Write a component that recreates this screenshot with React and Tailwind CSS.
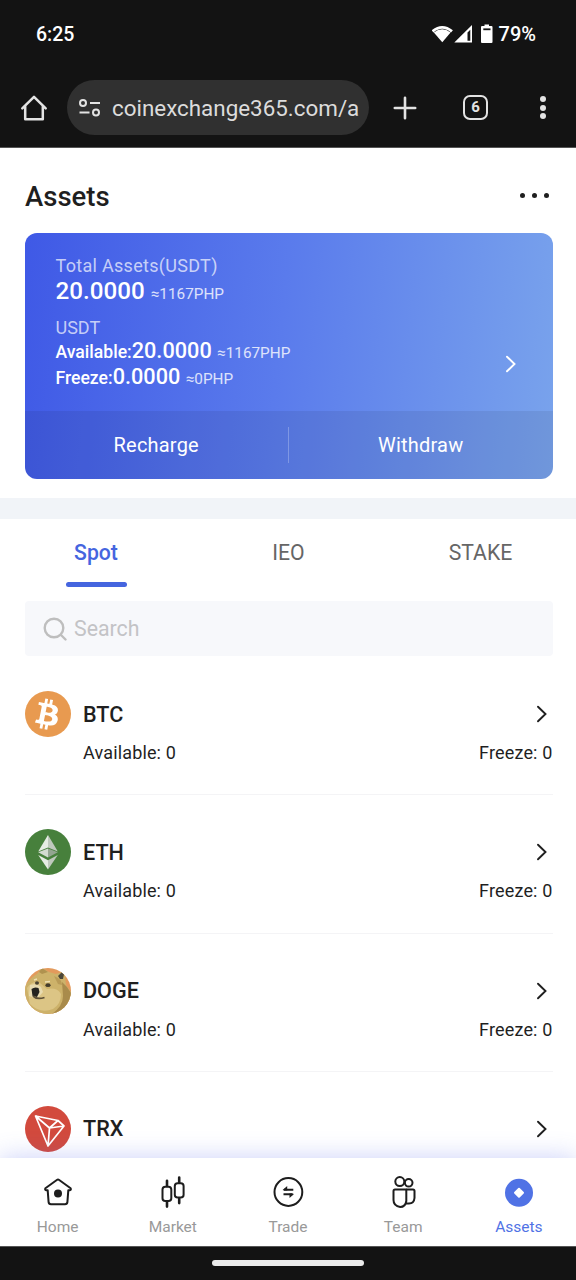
import { FaBitcoin } from "react-icons/fa";

const coins = [
  { name: "BTC", Icon: BtcIcon, available: 0, freeze: 0 },
  { name: "ETH", Icon: EthIcon, available: 0, freeze: 0 },
  { name: "DOGE", Icon: DogeIcon, available: 0, freeze: 0 },
  { name: "TRX", Icon: TrxIcon },
];

const tabs = ["Spot", "IEO", "STAKE"];

const navItems = [
  { label: "Home", Icon: HomeIcon },
  { label: "Market", Icon: MarketIcon },
  { label: "Trade", Icon: TradeIcon },
  { label: "Team", Icon: TeamIcon },
  { label: "Assets", Icon: AssetsIcon, active: true },
];

function BtcIcon() {
  return (
    <span className="flex size-[46px] items-center justify-center overflow-hidden rounded-full bg-white">
      <FaBitcoin className="size-[51px] shrink-0 -rotate-3 text-[#e89a50]" />
    </span>
  );
}

function EthIcon() {
  return (
    <svg viewBox="0 0 46 46" className="size-[46px]">
      <circle cx="23" cy="23" r="23" fill="#47803c" />
      <path d="M23 6 13.2 22.5 23 18.5Z" fill="#e6ece4" />
      <path d="M23 6 32.8 22.5 23 18.5Z" fill="#bfc9bd" />
      <path d="M23 19.5 13.2 23.3 23 28.5Z" fill="#d3dbd1" />
      <path d="M23 19.5 32.8 23.3 23 28.5Z" fill="#93a591" />
      <path d="M13.2 26 23 31.2V40.5Z" fill="#e6ece4" />
      <path d="M32.8 26 23 31.2V40.5Z" fill="#bfc9bd" />
    </svg>
  );
}

function DogeIcon() {
  return (
    <svg viewBox="0 0 46 46" className="size-[46px]">
      <defs>
        <clipPath id="doge">
          <circle cx="23" cy="23" r="23" />
        </clipPath>
      </defs>
      <g clipPath="url(#doge)">
        <rect width="46" height="46" fill="#e39a5c" />
        <path d="M0 46V18Q5 10 12 6L17 0 24 4 31 6 37 4 40 8 41 17 46 24V46Z" fill="#cdb26a" />
        <path d="M14 4 17 0 23 4 17 6Z" fill="#b0924f" />
        <path d="M37 14Q43 19 46 25V40L36 46H27Q38 38 38 28Z" fill="#a98b4b" />
        <path d="M29 8Q37 11 37 17L33 16Z" fill="#b99b57" />
        <path d="M33 8 37 4 39 6 38 11 35 11Z" fill="#4b4638" />
        <path d="M2 20Q7 12 15 15L22 21Q32 19 36 26 36 36 28 41 15 46 5 36Z" fill="#dcc585" />
        <path d="M5 17Q12 15 16 19L18 24 12 31 4 28Z" fill="#e8dbb0" />
        <path d="M6.5 21Q9.5 18.5 13.5 20L14.5 24 12 29 7.5 28Z" fill="#24231f" />
        <path d="M8 28Q12 32 19.5 29.5" stroke="#5d5036" strokeWidth="1.8" fill="none" />
        <ellipse cx="12" cy="15" rx="2" ry="1.7" fill="#4b4433" />
        <ellipse cx="23" cy="17.2" rx="2.6" ry="1.9" fill="#443c2c" />
        <path d="M9 12 12 11M20 14 25 13.5" stroke="#eee0b3" strokeWidth="1.4" />
      </g>
    </svg>
  );
}

function TrxIcon() {
  return (
    <svg viewBox="0 0 46 46" className="size-[46px]" fill="none">
      <circle cx="23" cy="23" r="23" fill="#d24a3d" />
      <path
        d="M10.5 10 33 14.5 39 20 23 40ZM10.5 10 24.5 22 23 40M24.5 22 33 14.5M24.5 22 39 20"
        stroke="white"
        strokeWidth="1.7"
        strokeLinejoin="round"
      />
    </svg>
  );
}

function HomeIcon() {
  return (
    <svg viewBox="0 0 32 32" className="size-8" fill="none" stroke="#1d1d1d" strokeWidth="2" strokeLinejoin="round">
      <path d="M14.8 4Q16 3.2 17.2 4L28.6 12.2Q29.4 14 27.8 14.3H26.3L25.4 26.2Q25.2 28.2 23 28.2H9Q6.8 28.2 6.6 26.2L5.7 14.3H4.2Q2.6 14 3.4 12.2Z" />
      <circle cx="16" cy="17.5" r="4" fill="#1d1d1d" stroke="none" />
    </svg>
  );
}

function MarketIcon() {
  return (
    <svg viewBox="0 0 32 32" className="size-8" fill="none" stroke="#1d1d1d" strokeWidth="2" strokeLinecap="round">
      <rect x="5.5" y="10.8" width="8.8" height="14.3" rx="2.8" />
      <rect x="17.8" y="7.3" width="8.8" height="14.3" rx="2.8" />
      <path strokeWidth="2.6" d="M10 4.8v5M10 26.3v4.3M22.2 1.6v5M22.2 22.8v4.3" />
    </svg>
  );
}

function TradeIcon() {
  return (
    <svg viewBox="0 0 32 32" className="size-8" fill="none" stroke="#1d1d1d">
      <circle cx="16.4" cy="16" r="13.9" strokeWidth="2" />
      <path d="M12 13.7H21.3M11.5 18.3H20.5" strokeWidth="1.9" />
      <path d="M10.6 13.9 15.2 10V14.6H12ZM22 18.1 17.5 22V17.4H20Z" fill="#1d1d1d" stroke="none" />
    </svg>
  );
}

function TeamIcon() {
  return (
    <svg viewBox="0 0 32 32" className="size-8" fill="none" stroke="#1d1d1d" strokeWidth="2" strokeLinejoin="round">
      <circle cx="12.8" cy="5.6" r="4.5" />
      <circle cx="21.7" cy="6.8" r="3.8" />
      <path d="M8 13.5H19.3V25Q18.5 31 13.200 31 6.500 30 6.500 24V15Q6.500 13.500 8 13.500Z" />
      <path d="M19.3 13.5H26Q27.5 13.500 27.500 15V22Q27 27.500 22 27.500H19" />
    </svg>
  );
}

function AssetsIcon() {
  return (
    <svg viewBox="0 0 32 32" className="size-8">
      <circle cx="17" cy="16.8" r="14" fill="#5072e5" />
      <path d="M17 12.8 21 16.8 17 20.8 13 16.8Z" fill="white" stroke="white" strokeWidth="2" strokeLinejoin="round" />
    </svg>
  );
}

function Chevron({ className }) {
  return (
    <svg viewBox="0 0 12 20" className={className} fill="none" stroke="currentColor" strokeWidth="1.9" strokeLinecap="round">
      <path d="M2 2.7 9.5 10 2 17.3" />
    </svg>
  );
}

function BrowserBar() {
  return (
    <header className="h-[148px] shrink-0 bg-[#131313] border-b border-[#555]">
      {/* Status bar */}
      <div className="flex h-[68px] items-center justify-between pl-9 pr-10 text-white">
        <span className="pt-px text-[19.5px] font-medium">6:25</span>
        <div className="flex items-center">
          <svg viewBox="0 0 67 22" className="h-[22px] w-[67px]" fill="white">
            <path d="M-.5 7.300Q10.200-1.500 20.900 7.300L19 9.500Q10.200 2 1.500 9.500Z" />
            <path d="M1.800 9.500Q10.200 3.200 18.600 9.500L10.300 19.200Z" />
            <path fillRule="evenodd" d="M40 2V19.5H22.300ZM38.300 6.800 35.500 9.600V17.700H38.300Z" />
            <path d="M52.5 1.5h4.500V3h2.500q1 0 1 1v15q0 1-1 1h-9.500q-1 0-1-1V4q0-1 1-1h2.500Z" />
            <path d="M51.300 5.400h7.200v1.800h-7.200Z" fill="#131313" />
          </svg>
          <span className="text-[20px] font-medium">79%</span>
        </div>
      </div>

      {/* Address bar */}
      <div className="flex h-[79px] items-center pl-5 text-[#e3e3e3]">
        <svg viewBox="0 0 28 28" className="size-7 shrink-0" fill="none" stroke="currentColor" strokeWidth="2.5" strokeLinejoin="round" strokeLinecap="round">
          <path d="M2.3 14.3 14 2.8 25.7 14.3M5.2 12V25.3H22.8V12" />
        </svg>
        <div className="ml-[19px] flex h-[55px] w-[302px] shrink-0 items-center rounded-full bg-[#303030] pl-3">
          <svg viewBox="0 0 22 18" className="h-[18px] w-[22px] shrink-0" fill="none" stroke="currentColor" strokeWidth="2">
            <circle cx="4" cy="4" r="3" />
            <circle cx="17" cy="13.5" r="3" />
            <path d="M11 4h10M.5 13.5h10" />
          </svg>
          <span className="ml-[11px] pt-[3px] text-[22.4px] whitespace-nowrap text-[#dcdcdc]">coinexchange365.com/a</span>
        </div>
        <svg viewBox="0 0 24 24" className="ml-6 size-6 shrink-0" fill="none" stroke="currentColor" strokeWidth="2.6" strokeLinecap="round">
          <path d="M12 1.8v20.4M1.8 12h20.4" />
        </svg>
        <div className="ml-[46px] flex size-[25px] shrink-0 items-center justify-center rounded-[7px] border-[2.5px] border-[#e3e3e3] text-[15px] font-bold">
          6
        </div>
        <div className="ml-[52px] flex flex-col gap-[2.5px]">
          <span className="size-[6px] rounded-full bg-[#e3e3e3]" />
          <span className="size-[6px] rounded-full bg-[#e3e3e3]" />
          <span className="size-[6px] rounded-full bg-[#e3e3e3]" />
        </div>
      </div>
    </header>
  );
}

function BalanceCard() {
  return (
    <section className="ml-[24.5px] mr-[23.5px] h-[246px] overflow-hidden rounded-xl bg-[linear-gradient(96deg,#3f59e6_0%,#5a7bec_48%,#79a3ec_100%)] text-white">
      <div className="flex h-[178px] items-center justify-between pl-[31px] pr-9">
        <div className="h-full pt-[20.5px]">
          <div className="text-lg leading-6 tracking-[0.3px] text-white/70">Total Assets(USDT)</div>
          <div className="h-[26px] text-[24.2px] leading-[26px] font-medium">
            20.0000 <span className="text-[15.3px] font-normal text-white/80">≈1167PHP</span>
          </div>
          <div className="mt-3 text-lg leading-6 text-white/70">USDT</div>
          <div className="h-[26px] text-[21.7px] leading-[22px] font-medium">
            <span className="text-[17.6px]">Available:</span>20.0000 <span className="text-[15.3px] font-normal text-white/80">≈1167PHP</span>
          </div>
          <div className="h-[26px] text-[21.7px] leading-[22px] font-medium">
            <span className="text-[17.6px]">Freeze:</span>0.0000 <span className="text-[15.3px] font-normal text-white/80">≈0PHP</span>
          </div>
        </div>
        <Chevron className="mt-[84px] h-5 w-3" />
      </div>
      <div className="flex h-[68px] items-center bg-black/7 text-xl tracking-[0.2px]">
        <button className="flex-1">Recharge</button>
        <span className="h-9 w-px bg-white/25" />
        <button className="flex-1">Withdraw</button>
      </div>
    </section>
  );
}

function CoinRow({ name, Icon, available, freeze }) {
  return (
    <div className="flex h-[138.3px] shrink-0 gap-[12.5px] border-b border-[#f4f4f6] pt-[34px] text-[#1f1f1f]">
      <Icon />
      <div className="flex-1">
        <div className="flex h-[46px] items-center justify-between">
          <span className="pt-[1.5px] text-[21.6px] font-medium">{name}</span>
          <Chevron className="mr-[5px] h-5 w-3" />
        </div>
        {available !== undefined && (
          <div className="mt-1 flex justify-between text-lg leading-6 tracking-[0.15px]">
            <span>Available: {available}</span>
            <span>Freeze: {freeze}</span>
          </div>
        )}
      </div>
    </div>
  );
}

export default function App() {
  return (
    <div className="flex h-[1280px] w-[576px] flex-col overflow-hidden bg-white font-['Roboto',sans-serif]">
      <BrowserBar />

      <main className="flex min-h-0 flex-1 flex-col overflow-hidden">
        <div className="flex h-[85px] shrink-0 items-center justify-between pl-[25px] pr-6 pt-3 text-[#1f1f1f]">
          <h1 className="text-[27.5px] font-medium">Assets</h1>
          <div className="mr-[3px] mb-[3px] flex gap-[7px]">
            <span className="size-[5px] rounded-full bg-[#1f1f1f]" />
            <span className="size-[5px] rounded-full bg-[#1f1f1f]" />
            <span className="size-[5px] rounded-full bg-[#1f1f1f]" />
          </div>
        </div>

        <div className="shrink-0">
          <BalanceCard />
        </div>

        <div className="mt-[19px] h-[21px] shrink-0 bg-[#f1f4f8]" />

        {/* Tabs */}
        <div className="flex h-[82px] shrink-0 text-[21.2px] leading-7 text-[#666]">
          {tabs.map((tab, i) => (
            <button key={tab} className="flex flex-1 flex-col items-center pt-5">
              <span className={i === 0 ? "font-medium text-[#4565df]" : "pl-px"}>{tab}</span>
              {i === 0 && <span className="mt-[15px] h-[5px] w-[61px] rounded-full bg-[#4565df]" />}
            </button>
          ))}
        </div>

        <div className="ml-[24.5px] mr-[23.5px] flex h-[55px] mb-px shrink-0 items-center rounded bg-[#f7f8fb] pl-[18.5px] text-[#c3c3c6]">
          <svg viewBox="0 0 24 24" className="size-6" fill="none" stroke="#bebebe" strokeWidth="2.4" strokeLinecap="round">
            <circle cx="11" cy="11" r="9.3" />
            <path d="m18 18 4.5 4.5" />
          </svg>
          <span className="pt-px ml-[7px] text-[21.3px]">Search</span>
        </div>

        <div className="ml-[24.5px] mr-[23.5px] flex flex-col">
          {coins.map((coin) => (
            <CoinRow key={coin.name} {...coin} />
          ))}
        </div>
      </main>

      <nav className="relative flex h-[88px] shrink-0 bg-white shadow-[0_0_24px_rgba(90,110,235,0.32)]">
        {navItems.map(({ label, Icon, active }) => (
          <button key={label} className="flex flex-1 flex-col items-center pt-[18px]">
            <Icon />
            <span className={active ? "mt-[7px] pl-px text-[15.5px] leading-6 text-[#5072e5]" : "mt-[7px] text-[15.5px] leading-6 text-[#999]"}>
              {label}
            </span>
          </button>
        ))}
      </nav>

      {/* Gesture bar */}
      <div className="relative flex h-[34px] shrink-0 justify-center border-t border-[#555] bg-[#131313] pt-[13px]">
        <div className="h-[6px] w-[152px] rounded-full bg-[#ebebeb]" />
      </div>
    </div>
  );
}
